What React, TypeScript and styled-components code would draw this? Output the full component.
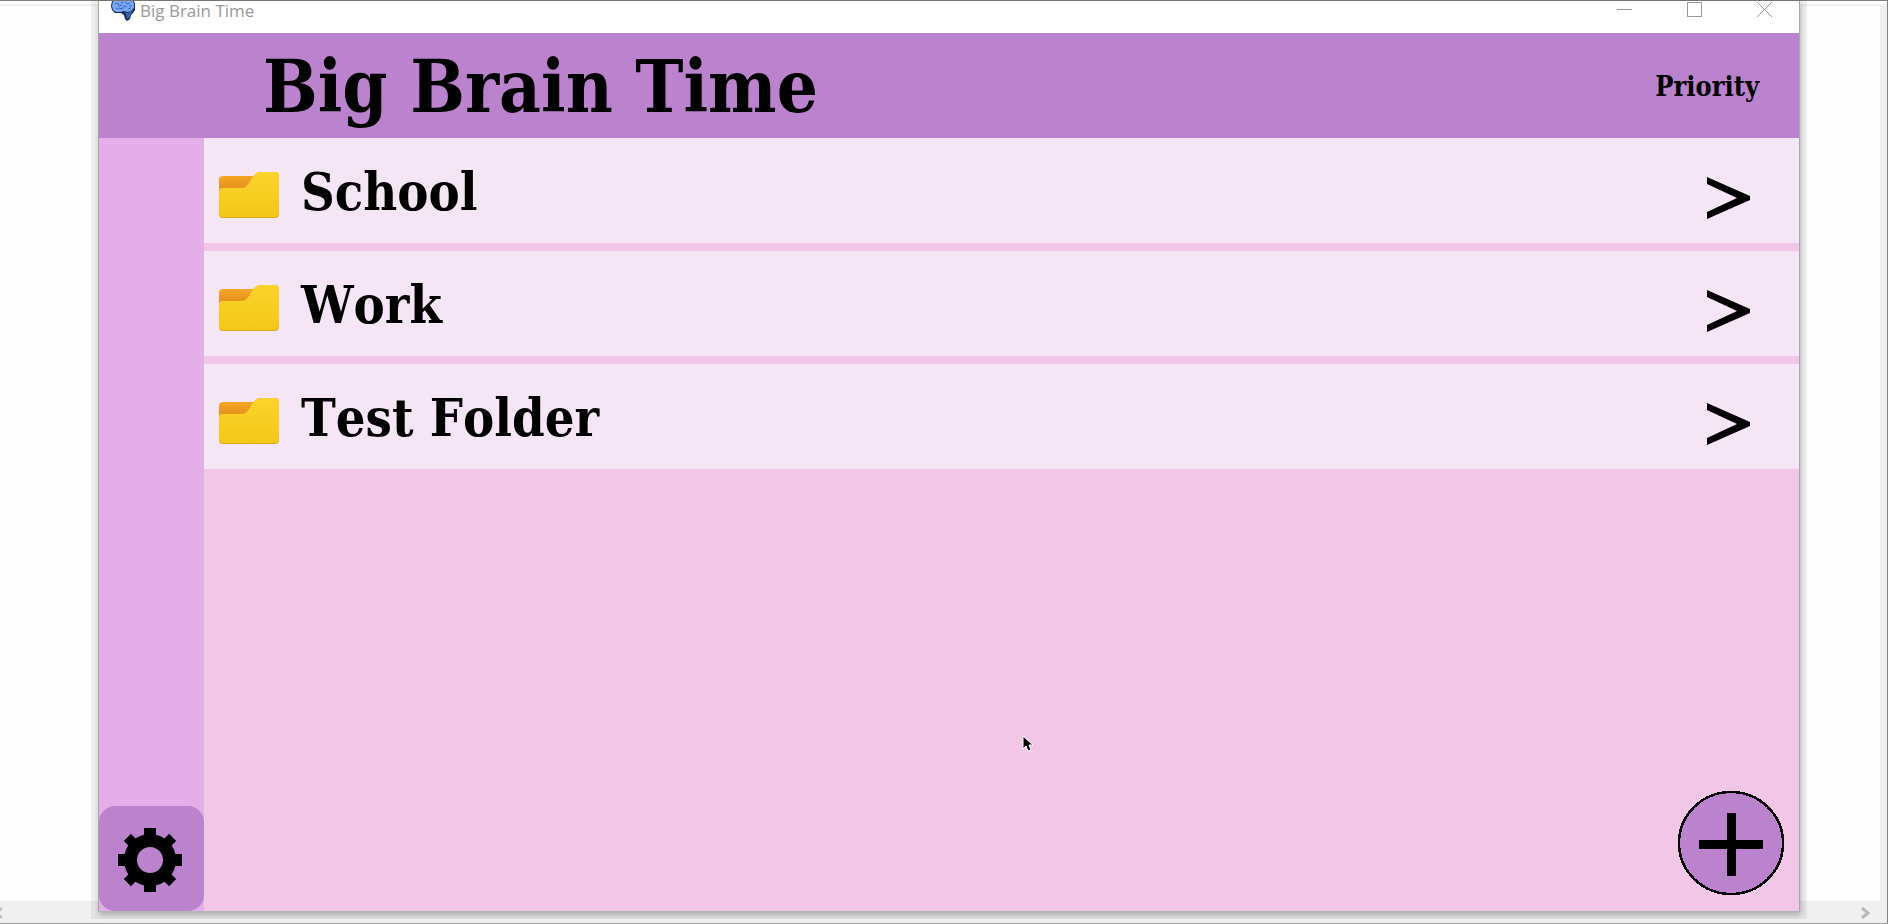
import React from 'react';
import styled, { createGlobalStyle } from 'styled-components';

const Global = createGlobalStyle`
  * { box-sizing: border-box; }
  body { margin: 0; background: #fefefe; }
  button { border: 0; padding: 0; margin: 0; background: none; color: inherit; cursor: pointer; }
`;

const serif = `'DejaVu Serif Condensed', 'DejaVu Serif', serif`;

const Desktop = styled.div`
  position: relative;
  display: flex;
  flex-direction: column;
  min-height: 100vh;
  padding: 0 88px 11px 98px;
  border-top: 1px solid #808080;
  border-bottom: 1px solid #a0a0a0;
  background: #fefefe;
`;

const Backdrop = styled.div`
  position: absolute;
  inset: 0;
  display: flex;
  flex-direction: column;
  border-right: 1px solid #808080;
`;

const BackdropPage = styled.div`
  flex: 1;
  margin-top: 3px;
  border-top: 2px solid #f0f0f0;
  border-right: 7px solid #f0f0f0;
`;

const ScrollBar = styled.div`
  display: flex;
  align-items: center;
  justify-content: space-between;
  height: 22px;
  padding: 2px 16px 0 0;
  background: #f0f0f0;
`;

const ScrollButton = styled.button`
  display: flex;
  color: #b8b8b8;
`;

const Window = styled.main`
  position: relative;
  flex: 1;
  display: flex;
  flex-direction: column;
  border-left: 1px solid #a8a8a8;
  border-right: 1px solid #a8a8a8;
  border-bottom: 1px solid #b4b4b4;
  box-shadow: 0 0 0 7px rgba(0, 0, 0, 0.05), 1px 3px 6px rgba(0, 0, 0, 0.25);
`;

const TitleBar = styled.div`
  display: flex;
  align-items: flex-start;
  justify-content: space-between;
  height: 32px;
  padding: 0 27px 0 12px;
  background: #fff;
`;

const AppName = styled.div`
  display: flex;
  gap: 4px;
  font: 17px/20px 'Open Sans', 'Noto Sans', sans-serif;
  color: #999;
`;

const WindowControls = styled.div`
  display: flex;
  gap: 55px;
  padding-top: 1px;
  color: #999;
`;

const WindowButton = styled.button`
  display: flex;
`;

const Header = styled.header`
  display: flex;
  align-items: center;
  justify-content: space-between;
  height: 105px;
  padding: 3px 40px 0 164px;
  background: #bb82cd;
  font-family: ${serif};
  color: #000;
`;

const Title = styled.h1`
  margin: 0;
  font-size: 72px;
  line-height: 102px;
  font-weight: 700;
  font-kerning: none;
`;

const SortButton = styled.button`
  font: 700 27px/32px ${serif};
`;

const Body = styled.div`
  flex: 1;
  display: flex;
`;

const Sidebar = styled.nav`
  display: flex;
  flex-direction: column;
  justify-content: flex-end;
  width: 105px;
  background: #e4aee8;
`;

const SettingsButton = styled.button`
  display: flex;
  align-items: center;
  justify-content: center;
  height: 105px;
  padding: 3px 3px 0 0;
  border-radius: 16px;
  background: #bb82cd;
`;

const Content = styled.section`
  flex: 1;
  display: flex;
  flex-direction: column;
  justify-content: space-between;
  background: #f1c6e7;
`;

const FolderList = styled.ul`
  display: flex;
  flex-direction: column;
  gap: 8px;
  margin: 0;
  padding: 0;
  list-style: none;
`;

const FolderRow = styled.button`
  display: flex;
  align-items: center;
  width: 100%;
  height: 105px;
  padding: 8px 49px 0 15px;
  background: #f5e6f5;
  text-align: left;
`;

const FolderName = styled.span`
  flex: 1;
  padding: 0 0 6px 22px;
  font: 700 52px/64px ${serif};
  font-kerning: none;
`;

const AddButton = styled.button`
  display: flex;
  align-self: flex-end;
  margin: 0 14px 15px 0;
`;

const Pointer = styled.svg`
  position: absolute;
  left: 54.3%;
  bottom: 158px;
`;

function BrainIcon() {
  return (
    <svg width="25" height="20" viewBox="0 0 25 20" aria-hidden="true">
      <path d="M1 0H23L24 3V9L22 12L20 14L19 18L16 20L14 18L13 14L10 12L4 12L1 9L0 5Z" fill="#17264f" />
      <path d="M2 0H22L23 3V7L20 10L17 11L13 10L10 11L5 11L2 9L1 5Z" fill="#79a5f7" />
      <path d="M13 11L17 12L22 9L20 13L18 17L16 18L15 14Z" fill="#2f63b8" />
      <path d="M4 3L7 2L8 5L11 4M5 8L8 7L11 8L13 5L16 6M14 1L16 3L19 2M18 5L21 5M17 8L20 7M10 1L12 2" fill="none" stroke="#3d68bb" />
    </svg>
  );
}

function FolderIcon() {
  return (
    <svg width="60" height="48" viewBox="0 0 60 48" aria-hidden="true">
      <defs>
        <linearGradient id="folderFront" x1="0" y1="0" x2="0" y2="1">
          <stop offset="0" stopColor="#fbd32b" />
          <stop offset="1" stopColor="#f2c718" />
        </linearGradient>
        <linearGradient id="folderBack" x1="0" y1="0" x2="0" y2="1">
          <stop offset="0" stopColor="#f5a623" />
          <stop offset="0.4" stopColor="#e8951f" />
        </linearGradient>
      </defs>
      <path d="M4 5H40V30H0V9Q0 5 4 5Z" fill="url(#folderBack)" />
      <path d="M0 20Q0 17 4 17H22Q27 17 30 12L33 7Q37 1 42 1H56Q60 1 60 5V43Q60 47 56 47H4Q0 47 0 43Z" fill="#d9ab18" />
      <path d="M0 20Q0 17 4 17H22Q27 17 30 12L33 7Q37 1 42 1H56Q60 1 60 5V42Q60 46 56 46H4Q0 46 0 42Z" fill="url(#folderFront)" />
    </svg>
  );
}

function ChevronIcon() {
  return (
    <svg width="44" height="50" viewBox="0 -6 44 50" aria-hidden="true">
      <path d="M1 1L44 20V24L1 43V36L31 22L1 8Z" />
    </svg>
  );
}

function GearIcon() {
  return (
    <svg width="64" height="64" viewBox="-32 -32 64 64" aria-hidden="true">
      <circle r="19.5" fill="none" stroke="#000" strokeWidth="13" />
      {[0, 45, 90, 135].map((angle) => (
        <g key={angle} transform={`rotate(${angle})`}>
          <rect x={angle % 90 ? -5 : -6} y="-32" width={angle % 90 ? 10 : 12} height="10" />
          <rect x={angle % 90 ? -5 : -6} y="22" width={angle % 90 ? 10 : 12} height="10" />
        </g>
      ))}
    </svg>
  );
}

function PlusIcon() {
  return (
    <svg width="108" height="106" viewBox="0 0 108 106" shapeRendering="crispEdges" aria-hidden="true">
      <ellipse cx="54" cy="53" rx="52" ry="51" fill="#bb82cd" stroke="#000" strokeWidth="2.5" />
      <path d="M50 23H59V50H86V59H59V86H50V59H22V50H50Z" />
    </svg>
  );
}

const folders = ['School', 'Work', 'Test Folder'];

export default function App() {
  return (
    <Desktop>
      <Global />
      <Backdrop>
        <BackdropPage />
        <ScrollBar>
          <ScrollButton aria-label="Scroll left">
            <svg width="3" height="12" viewBox="0 0 3 12"><path d="M2 1L-3 6L2 11" fill="none" stroke="currentColor" strokeWidth="2" /></svg>
          </ScrollButton>
          <ScrollButton aria-label="Scroll right">
            <svg width="11" height="12" viewBox="0 0 11 12"><path d="M2 1L8 6L2 11" fill="none" stroke="currentColor" strokeWidth="3" /></svg>
          </ScrollButton>
        </ScrollBar>
      </Backdrop>
      <Window>
        <TitleBar>
          <AppName><BrainIcon />Big Brain Time</AppName>
          <WindowControls>
            <WindowButton aria-label="Minimize">
              <svg width="15" height="15"><path d="M0 7.5H15" stroke="currentColor" /></svg>
            </WindowButton>
            <WindowButton aria-label="Maximize">
              <svg width="15" height="15"><rect x="0.5" y="0.5" width="14" height="14" fill="none" stroke="currentColor" /></svg>
            </WindowButton>
            <WindowButton aria-label="Close">
              <svg width="15" height="15"><path d="M0 0L15 15M15 0L0 15" stroke="currentColor" /></svg>
            </WindowButton>
          </WindowControls>
        </TitleBar>
        <Header>
          <Title>Big Brain Time</Title>
          <SortButton>Priority</SortButton>
        </Header>
        <Body>
          <Sidebar>
            <SettingsButton aria-label="Settings"><GearIcon /></SettingsButton>
          </Sidebar>
          <Content>
            <FolderList>
              {folders.map((name) => (
                <li key={name}>
                  <FolderRow>
                    <FolderIcon />
                    <FolderName>{name}</FolderName>
                    <ChevronIcon />
                  </FolderRow>
                </li>
              ))}
            </FolderList>
            <AddButton aria-label="Add folder"><PlusIcon /></AddButton>
          </Content>
        </Body>
        <Pointer width="12" height="18" viewBox="0 0 12 18" aria-hidden="true">
          <path d="M1 1V14L4 11L6 16L9 15L7 10H11Z" fill="#000" stroke="#fff" />
        </Pointer>
      </Window>
    </Desktop>
  );
}
